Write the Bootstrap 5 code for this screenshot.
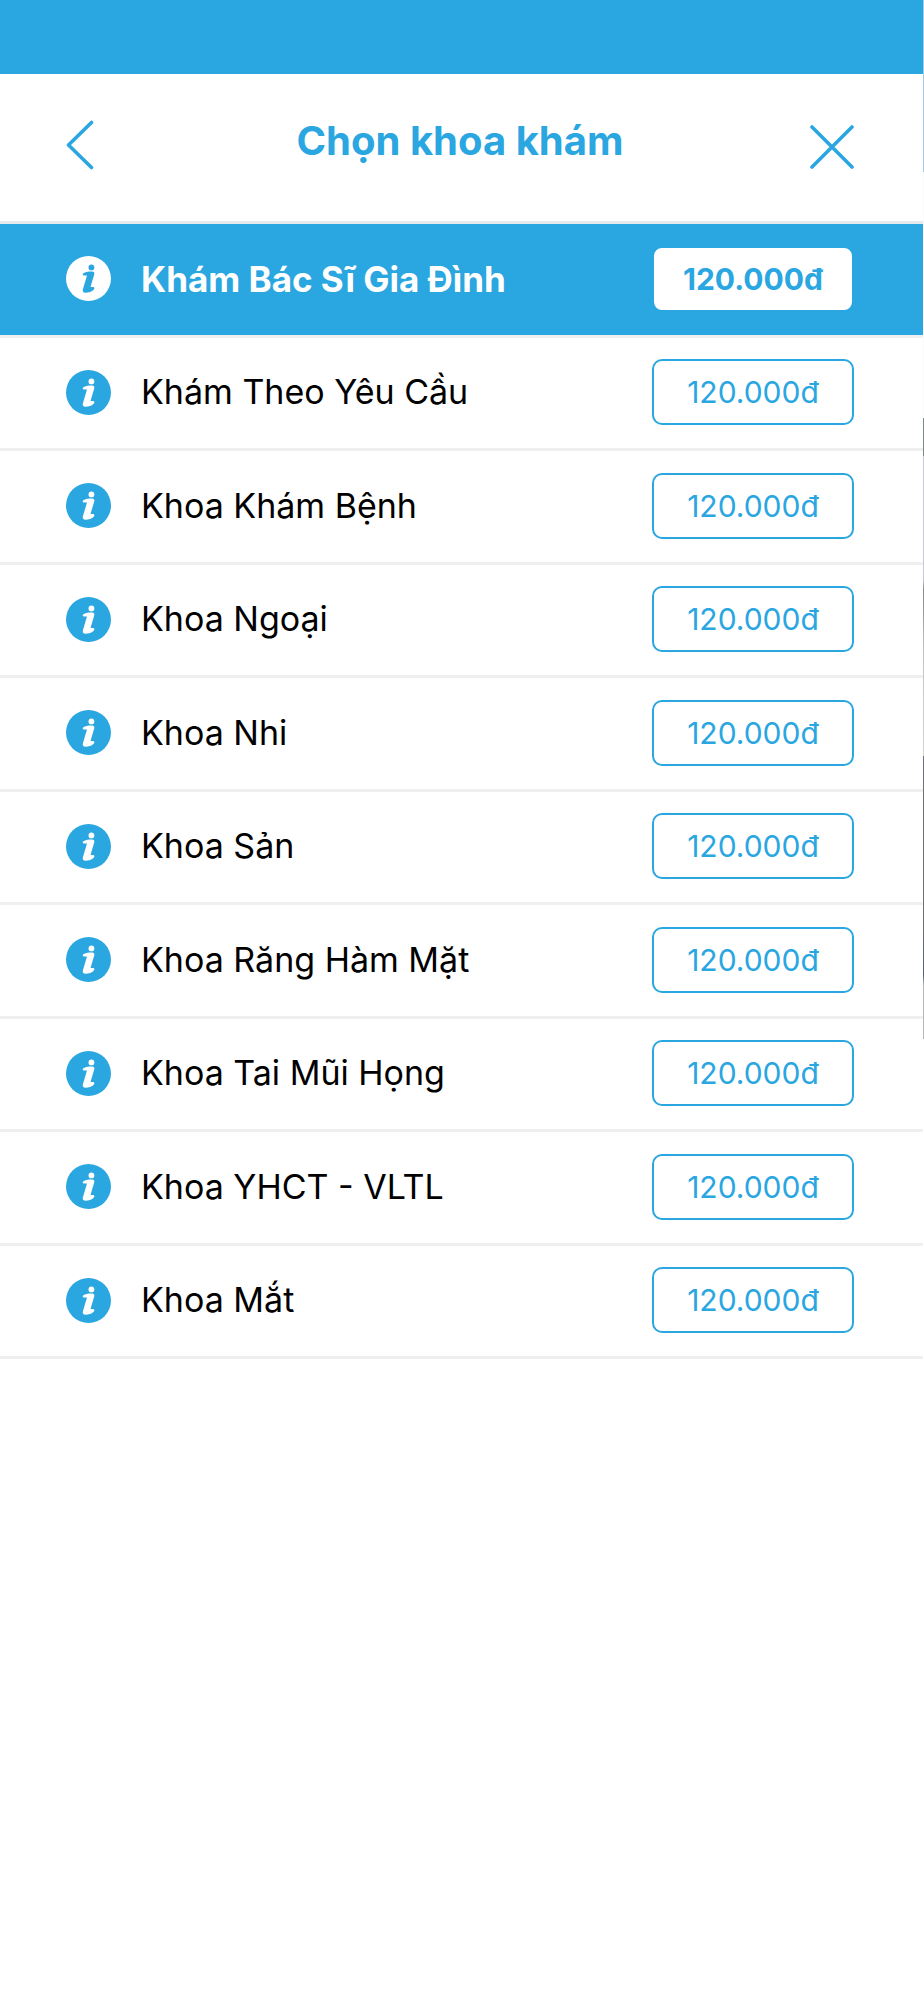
<!DOCTYPE html>
<html lang="vi">
<head>
<meta charset="utf-8">
<meta name="viewport" content="width=device-width, initial-scale=1">
<title>Chọn khoa khám</title>
<link href="https://cdn.jsdelivr.net/npm/bootstrap@5.3.0/dist/css/bootstrap.min.css" rel="stylesheet">
<style>
  :root { --brand: #2aa6e1; }
  body { font-family: Inter, "Noto Sans", sans-serif; color: #000; background: #fff; }
  .screen { min-height: 100vh; padding-right: 1px; position: relative; }
  /* backdrop showing along the right edge */
  .screen::after {
    content: ""; position: absolute; top: 0; right: 0; bottom: 0; width: 1px;
    background: linear-gradient(#9fcdea 172px, #fbfbfb 172px, #fbfbfb 418px, #7d8784 418px, #7d8784 456px, #c9c9d2 456px, #c9c9d2 580px, #8a8784 590px, #c4c2bc 650px, #d4d4d0 756px, #707377 756px, #6f7072 930px, #55606f 975px, #b5b5b8 985px, #b5b5b8 1039px, #fff 1039px);
  }
  .status-strip { height: 74px; background: var(--brand); }
  .app-head { height: 150px; padding: 0 69px 5px 66px; border-bottom: 3px solid #e6e9ee; }
  .app-head h1 { font-size: 40px; line-height: 48px; padding-bottom: 8px; color: var(--brand); }
  .icon-btn { color: inherit; line-height: 0; }
  .app-head .icon-btn { color: var(--brand); }
  .dept { height: 113px; padding: 0 69px 2px 66px; gap: 30px; border-bottom: 3px solid #efefef; font-size: 34px; line-height: 44px; }
  .dept:nth-child(odd) { height: 114px; }
  .dept .icon-btn { color: var(--brand); --mark: #fff; }
  .price { width: 202px; height: 66px; padding: 0; border: 2px solid var(--brand); border-radius: 10px; color: var(--brand); font-size: 30px; line-height: 36px; }
  .price:hover { background: var(--brand); color: #fff; }
  .dept.current { background: var(--brand); color: #fff; font-size: 35px; font-weight: 700; }
  .dept.current .icon-btn { color: #fff; --mark: var(--brand); }
  .dept.current .price { background: #fff; color: var(--brand); font-weight: 700; }
</style>
</head>
<body>
<svg class="d-none" aria-hidden="true">
  <symbol id="info" viewBox="0 0 45 45">
    <circle cx="22.500" cy="22.500" r="22.500" fill="currentColor"/>
    <g style="fill:var(--mark)">
      <circle cx="25.400" cy="11.400" r="2.900"/>
      <path d="M17.800 17C20.500 15.900 23.500 15.500 26 15.600C28 15.700 28.700 16.800 28.200 18.500L24.500 31H27.200C28.500 31 28.700 32.600 27.900 33.500C26 35.800 22.500 36.700 19.500 36.700C17.200 36.700 16.300 35.200 16.900 33.200L21 19.600H18.100C16.300 19.600 16.300 17.600 17.800 17Z"/>
    </g>
  </symbol>
</svg>
<div class="screen d-flex flex-column">
  <div class="status-strip"></div>
  <header class="app-head d-flex align-items-center justify-content-between">
    <button type="button" class="icon-btn btn p-0 border-0" aria-label="Quay lại">
      <svg width="44" height="50" viewBox="0 0 44 50" fill="none" stroke="currentColor" stroke-width="3.600" stroke-linecap="round" stroke-linejoin="round"><path d="M25.500 2.500L2.500 25L25.500 47.500"/></svg>
    </button>
    <h1 class="m-0 fw-bold">Chọn khoa khám</h1>
    <button type="button" class="icon-btn btn p-0 border-0" aria-label="Đóng">
      <svg width="44" height="50" viewBox="0 0 44 50" fill="none" stroke="currentColor" stroke-width="3.600" stroke-linecap="round"><path d="M2 7L42 47M42 7L2 47"/></svg>
    </button>
  </header>
  <main>
    <ul class="list-unstyled m-0" id="departments"></ul>
  </main>
</div>
<script src="https://cdn.jsdelivr.net/npm/bootstrap@5.3.0/dist/js/bootstrap.bundle.min.js"></script>
<script>
  const names = ["Khám Bác Sĩ Gia Đình", "Khám Theo Yêu Cầu", "Khoa Khám Bệnh", "Khoa Ngoại", "Khoa Nhi",
    "Khoa Sản", "Khoa Răng Hàm Mặt", "Khoa Tai Mũi Họng", "Khoa YHCT - VLTL", "Khoa Mắt"];
  document.getElementById("departments").innerHTML = names.map((name, i) => `
    <li class="dept d-flex align-items-center${i === 0 ? " current" : ""}">
      <button type="button" class="icon-btn btn p-0 border-0 rounded-circle" aria-label="Thông tin ${name}"><svg width="45" height="45"><use href="#info"/></svg></button>
      <span class="flex-grow-1">${name}</span>
      <button type="button" class="price btn">120.000đ</button>
    </li>`).join("");
</script>
</body>
</html>
